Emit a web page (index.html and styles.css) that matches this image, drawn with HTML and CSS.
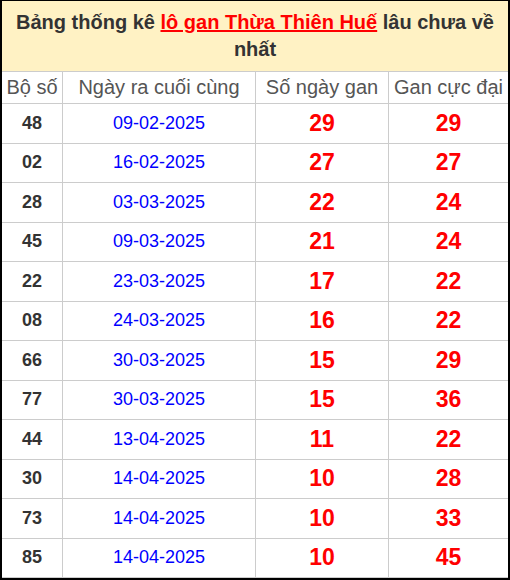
FILE: index.html
```html
<!DOCTYPE html>
<html lang="vi">
<head>
<meta charset="utf-8">
<link rel="stylesheet" href="styles.css">
</head>
<body>
<div class="box">
  <h2 class="title">Bảng thống kê <a href="#" class="hl">lô gan Thừa Thiên Huế</a> lâu chưa về nhất</h2>
  <table class="tbl">
    <thead>
      <tr><th class="c1">Bộ số</th><th class="c2">Ngày ra cuối cùng</th><th class="c3">Số ngày gan</th><th class="c4">Gan cực đại</th></tr>
    </thead>
    <tbody>
      <tr><td class="num">48</td><td class="date">09-02-2025</td><td class="red">29</td><td class="red">29</td></tr>
      <tr><td class="num">02</td><td class="date">16-02-2025</td><td class="red">27</td><td class="red">27</td></tr>
      <tr><td class="num">28</td><td class="date">03-03-2025</td><td class="red">22</td><td class="red">24</td></tr>
      <tr><td class="num">45</td><td class="date">09-03-2025</td><td class="red">21</td><td class="red">24</td></tr>
      <tr><td class="num">22</td><td class="date">23-03-2025</td><td class="red">17</td><td class="red">22</td></tr>
      <tr><td class="num">08</td><td class="date">24-03-2025</td><td class="red">16</td><td class="red">22</td></tr>
      <tr><td class="num">66</td><td class="date">30-03-2025</td><td class="red">15</td><td class="red">29</td></tr>
      <tr><td class="num">77</td><td class="date">30-03-2025</td><td class="red">15</td><td class="red">36</td></tr>
      <tr><td class="num">44</td><td class="date">13-04-2025</td><td class="red">11</td><td class="red">22</td></tr>
      <tr><td class="num">30</td><td class="date">14-04-2025</td><td class="red">10</td><td class="red">28</td></tr>
      <tr><td class="num">73</td><td class="date">14-04-2025</td><td class="red">10</td><td class="red">33</td></tr>
      <tr><td class="num">85</td><td class="date">14-04-2025</td><td class="red">10</td><td class="red">45</td></tr>
    </tbody>
  </table>
</div>
</body>
</html>
```
FILE: styles.css
```css
html, body {
  margin: 0;
  padding: 0;
  background: #000;
}
body {
  font-family: "Liberation Sans", Arial, sans-serif;
}
.box {
  margin: 1px 2px 2px 2px;
  background: #fff;
}
.title {
  margin: 0;
  background: #fff2c4;
  color: #333;
  font-size: 20px;
  font-weight: bold;
  line-height: 27px;
  text-align: center;
  padding: 8px 6px 8px 6px;
  height: 54px;
}
.hl {
  color: #ff0000;
  text-decoration: underline;
}
.tbl {
  width: 100%;
  border-collapse: collapse;
  table-layout: fixed;
}
.tbl th, .tbl td {
  border: 1px solid #ccc;
  text-align: center;
  padding: 0;
}
.tbl tr > :first-child { border-left: none; }
.tbl tr > :last-child { border-right: none; }
.tbl th {
  height: 31px;
  font-size: 20px;
  font-weight: normal;
  color: #555;
}
.c1 { width: 60px; }
.c2 { width: 192px; }
.c3 { width: 132px; }
.c4 { width: auto; }
.tbl td {
  height: 38.5px;
}
.num {
  font-size: 18px;
  font-weight: bold;
  color: #333;
}
.date {
  font-size: 18px;
  color: #0000ff;
}
.red {
  font-size: 23px;
  font-weight: bold;
  color: #ff0000;
}
```
